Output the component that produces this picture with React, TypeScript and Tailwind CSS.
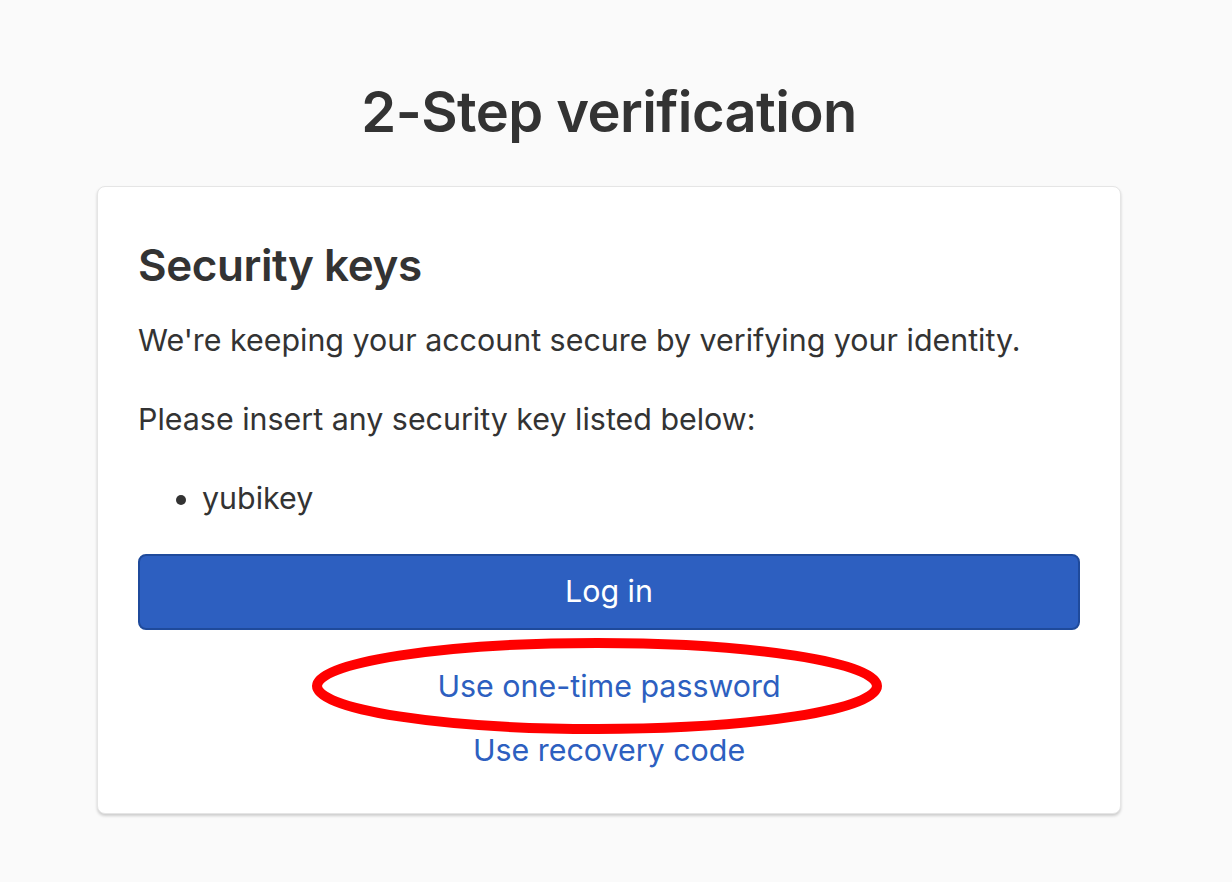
export default function App() {
  return (
    <div className="min-h-[882px] bg-[#fafafa] font-['Inter',sans-serif] text-[#333333]">
      <div className="w-[1218px] pt-[72px]">
        <h1 className="text-center text-[56px] font-semibold leading-[80px] tracking-[-0.01em]">
          2-Step verification
        </h1>

        <div className="mx-auto mt-[34px] w-[1024px] rounded-lg border border-[#e5e5e5] bg-white px-10 pb-[31px] pt-[50px] shadow-[0_2px_3px_rgba(0,0,0,0.18)]">
          <h2 className="text-[44px] font-semibold leading-[56px] tracking-[-0.01em]">Security keys</h2>

          <p className="mt-[25px] text-[30.4px] leading-[44px]">
            We're keeping your account secure by verifying your identity.
          </p>
          <p className="mt-[35px] text-[30.4px] leading-[44px]">Please insert any security key listed below:</p>

          <ul className="mt-[35px] list-disc pl-[64px] text-[30.4px] leading-[44px]">
            <li>yubikey</li>
          </ul>

          <button
            type="button"
            className="mt-[34px] flex h-[76px] w-full items-center justify-center rounded-lg border-2 border-[#1f4a9b] bg-[#2d5fc0] text-[30.4px] text-white"
          >
            Log in
          </button>

          <div className="mt-[24px] flex flex-col items-center text-[30.4px] leading-[64px] text-[#2d5fc0]">
            <a href="#" className="relative">
              Use one-time password
              <svg
                className="pointer-events-none absolute left-1/2 top-1/2 ml-[-12px] h-[100px] w-[580px] -translate-x-1/2 -translate-y-1/2"
                viewBox="0 0 580 100"
                aria-hidden
              >
                <ellipse cx="290" cy="50" rx="280" ry="43" fill="none" stroke="#ff0000" strokeWidth="10" />
              </svg>
            </a>
            <a href="#">Use recovery code</a>
          </div>
        </div>
      </div>
    </div>
  );
}
